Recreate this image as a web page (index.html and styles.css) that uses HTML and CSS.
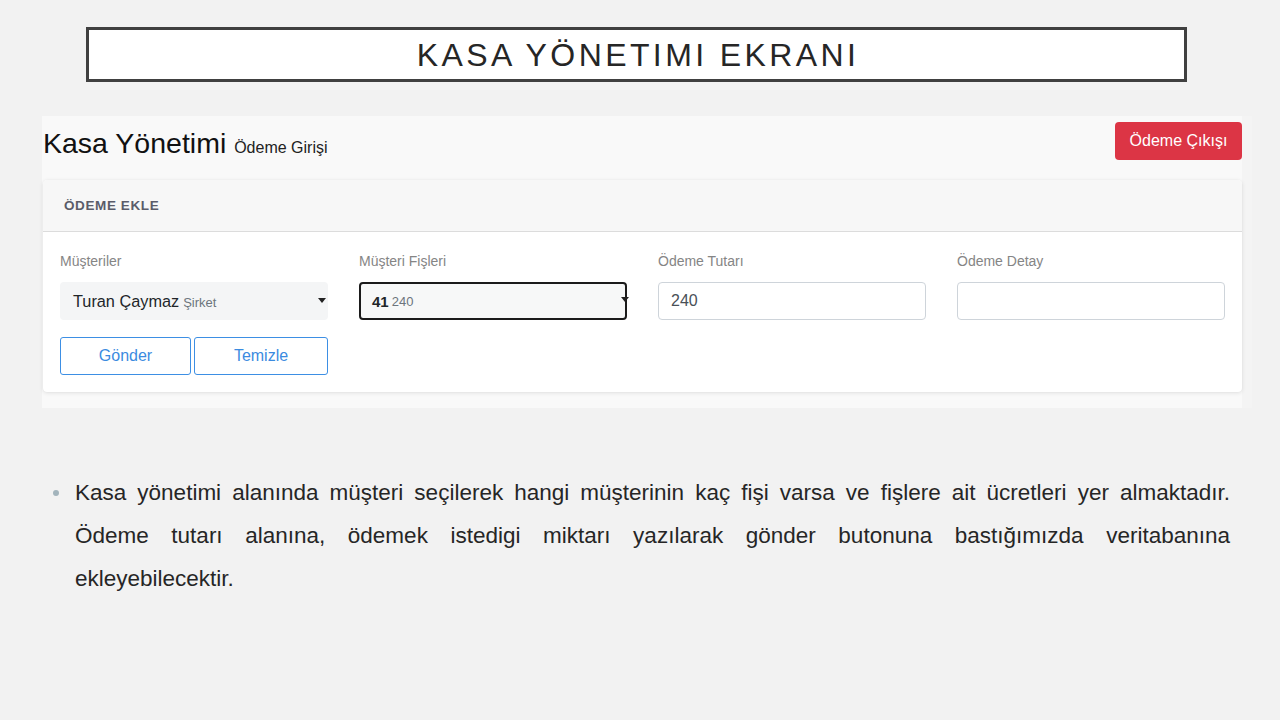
FILE: index.html
```html
<!DOCTYPE html>
<html lang="tr">
<head>
<meta charset="utf-8">
<title>Kasa Yönetimi Ekranı</title>
<link rel="stylesheet" href="styles.css">
</head>
<body>
<div class="slide">
  <div class="title-box"><h1 class="slide-title">KASA YÖNETIMI EKRANI</h1></div>

  <div class="shot">
    <div class="page-head">
      <h2 class="page-title">Kasa Yönetimi <small class="page-sub">Ödeme Girişi</small></h2>
      <button class="btn-red">Ödeme Çıkışı</button>
    </div>

    <div class="card">
      <div class="card-head">ÖDEME EKLE</div>
      <div class="card-body">
        <div class="fields">
          <div class="field">
            <label class="lbl">Müşteriler</label>
            <div class="sel sel-soft"><span class="val">Turan Çaymaz</span><span class="sub">Şirket</span><span class="caret"></span></div>
          </div>
          <div class="field">
            <label class="lbl">Müşteri Fişleri</label>
            <div class="sel sel-focus"><span class="val-b">41</span><span class="sub2">240</span><span class="caret caret-edge"></span></div>
          </div>
          <div class="field">
            <label class="lbl">Ödeme Tutarı</label>
            <div class="inp">240</div>
          </div>
          <div class="field">
            <label class="lbl">Ödeme Detay</label>
            <div class="inp"></div>
          </div>
        </div>
        <div class="actions">
          <button class="btn-out btn-send">Gönder</button>
          <button class="btn-out btn-clear">Temizle</button>
        </div>
      </div>
    </div>
  </div>

  <ul class="notes">
    <li>Kasa yönetimi alanında müşteri seçilerek hangi müşterinin kaç fişi varsa ve fişlere ait ücretleri yer almaktadır. Ödeme tutarı alanına, ödemek istedigi miktarı yazılarak gönder butonuna bastığımızda veritabanına ekleyebilecektir.</li>
  </ul>
</div>
</body>
</html>
```

FILE: styles.css
```css
* { box-sizing: border-box; }
html, body { margin: 0; padding: 0; }
body {
  background: #f2f2f2;
  font-family: "Liberation Sans", Arial, sans-serif;
  width: 1280px;
  height: 720px;
  overflow: hidden;
}
.slide { padding-top: 27px; }

.title-box {
  margin-left: 86px;
  width: 1101px;
  height: 55px;
  border: 3px solid #404040;
  background: #ffffff;
  display: flex;
  align-items: center;
  justify-content: center;
}
.slide-title {
  margin: 0;
  font-weight: normal;
  font-size: 32px;
  letter-spacing: 3.4px;
  color: #262626;
  line-height: 1;
  padding-left: 3px;
}

.shot {
  margin-top: 34px;
  margin-left: 42px;
  width: 1210px;
  height: 292px;
  background: #f9f9f9;
  box-shadow: inset -10px 0 0 #f4f4f4;
}
.page-head {
  display: flex;
  justify-content: space-between;
  align-items: flex-start;
  height: 64px;
  padding-left: 1px;
  padding-right: 10px;
}
.page-title {
  margin: 11px 0 0 0;
  font-weight: normal;
  font-size: 28.5px;
  line-height: 32px;
  color: #111;
}
.page-sub {
  font-size: 16px;
  color: #222;
}
.btn-red {
  margin-top: 6px;
  width: 127px;
  height: 38px;
  border: none;
  border-radius: 4px;
  background: #dc3545;
  color: #fff;
  font-family: "Liberation Sans", Arial, sans-serif;
  font-size: 16px;
  padding: 0;
}

.card {
  margin-left: 1px;
  width: 1199px;
  background: #fff;
  border-radius: 4px;
  box-shadow: 0 1px 4px rgba(0,0,0,0.10), 0 0 1px rgba(0,0,0,0.08);
}
.card-head {
  height: 52px;
  padding-left: 21px;
  display: flex;
  align-items: center;
  background: #f7f7f7;
  border-bottom: 1px solid #dcdcdc;
  border-radius: 4px 4px 0 0;
  font-size: 13.5px;
  font-weight: bold;
  color: #5a5c69;
  letter-spacing: 0.6px;
}
.card-body {
  padding: 21px 17px 17px 17px;
}
.fields {
  display: grid;
  grid-template-columns: repeat(4, 268px);
  column-gap: 31px;
}
.field { display: flex; flex-direction: column; }
.lbl {
  font-size: 14px;
  line-height: 17px;
  color: #858585;
  margin-bottom: 12px;
}
.sel, .inp {
  position: relative;
  height: 38px;
  border-radius: 4px;
  display: flex;
  align-items: center;
  white-space: pre;
}
.sel-soft {
  background: #f4f5f6;
  padding-left: 13px;
}
.val { font-size: 16.3px; color: #212529; }
.sub { font-size: 13px; color: #6c757d; margin-top: 3px; margin-left: 4px; }
.sel-focus {
  border: 2px solid #1b1b1b;
  background: #f7f8f8;
  padding-left: 11px;
}
.val-b { font-size: 15px; font-weight: bold; color: #212529; }
.sub2 { font-size: 13px; color: #6c757d; margin-top: 1px; margin-left: 3px; }
.caret {
  position: absolute;
  right: 2px;
  top: 16px;
  width: 0;
  height: 0;
  border-left: 4.5px solid transparent;
  border-right: 4.5px solid transparent;
  border-top: 5px solid #222;
}
.caret-edge { right: -4px; top: 13px; }
.inp {
  border: 1px solid #ced4da;
  background: #fff;
  padding-left: 12px;
  font-size: 16px;
  color: #495057;
}

.actions {
  display: flex;
  gap: 3px;
  margin-top: 17px;
}
.btn-out {
  height: 38px;
  border: 1px solid #3d8fe4;
  border-radius: 3px;
  background: #fff;
  color: #3b8be0;
  font-family: "Liberation Sans", Arial, sans-serif;
  font-size: 16px;
  padding: 0;
}
.btn-send { width: 131px; }
.btn-clear { width: 134px; }

.notes {
  list-style: none;
  margin: 63px 0 0 0;
  padding: 0 0 0 75px;
  width: 1230px;
}
.notes li {
  position: relative;
  font-size: 22.5px;
  line-height: 43px;
  color: #262626;
  text-align: justify;
}
.notes li::before {
  content: "";
  position: absolute;
  left: -22px;
  top: 19px;
  width: 6px;
  height: 6px;
  border-radius: 50%;
  background: #a3b4bc;
}
```
